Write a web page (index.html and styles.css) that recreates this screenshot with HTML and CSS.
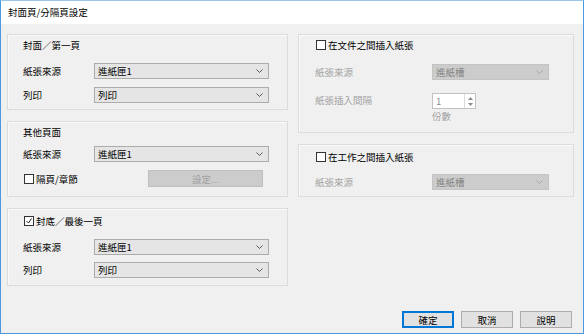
FILE: index.html
```html
<!DOCTYPE html>
<html lang="zh-Hant">
<head>
  <meta charset="UTF-8">
  <title>封面頁/分隔頁設定</title>
  <link rel="stylesheet" href="styles.css">
</head>
<body>
  <div class="window">
    <div class="titlebar">封面頁/分隔頁設定</div>

    <div class="main">
      <div class="col col-left">
        <section class="group g1">
          <div class="group-title">封面／第一頁</div>
          <div class="row first">
            <span class="label">紙張來源</span>
            <div class="select"><span>進紙匣1</span><svg width="7" height="4"><polyline points="0.5,0.5 3.5,3.5 6.5,0.5"/></svg></div>
          </div>
          <div class="row">
            <span class="label">列印</span>
            <div class="select"><span>列印</span><svg width="7" height="4"><polyline points="0.5,0.5 3.5,3.5 6.5,0.5"/></svg></div>
          </div>
        </section>

        <section class="group g2">
          <div class="group-title">其他頁面</div>
          <div class="row first">
            <span class="label">紙張來源</span>
            <div class="select"><span>進紙匣1</span><svg width="7" height="4"><polyline points="0.5,0.5 3.5,3.5 6.5,0.5"/></svg></div>
          </div>
          <div class="row row-check">
            <label class="check"><span class="box"></span>隔頁/章節</label>
            <div class="btn disabled">設定...</div>
          </div>
        </section>

        <section class="group g3">
          <label class="group-title check"><span class="box checked"><svg width="8" height="8"><polyline points="1.5,4 3.5,6 6.5,1.5"/></svg></span>封底／最後一頁</label>
          <div class="row first">
            <span class="label">紙張來源</span>
            <div class="select"><span>進紙匣1</span><svg width="7" height="4"><polyline points="0.5,0.5 3.5,3.5 6.5,0.5"/></svg></div>
          </div>
          <div class="row">
            <span class="label">列印</span>
            <div class="select"><span>列印</span><svg width="7" height="4"><polyline points="0.5,0.5 3.5,3.5 6.5,0.5"/></svg></div>
          </div>
        </section>
      </div>

      <div class="col col-right">
        <section class="group rg1">
          <label class="group-title check"><span class="box"></span>在文件之間插入紙張</label>
          <div class="row first">
            <span class="label off">紙張來源</span>
            <div class="select off"><span>進紙槽</span><svg width="7" height="4"><polyline points="0.5,0.5 3.5,3.5 6.5,0.5"/></svg></div>
          </div>
          <div class="row row-spin">
            <span class="label off">紙張插入間隔</span>
            <div class="spin-wrap">
              <div class="spin">
                <span class="spin-val">1</span>
                <div class="spin-btns">
                  <svg width="5" height="3"><polygon points="0,3 2.5,0 5,3"/></svg>
                  <svg width="5" height="3"><polygon points="0,0 2.5,3 5,0"/></svg>
                </div>
              </div>
              <div class="unit">份數</div>
            </div>
          </div>
        </section>

        <section class="group rg2">
          <label class="group-title check"><span class="box"></span>在工作之間插入紙張</label>
          <div class="row first">
            <span class="label off">紙張來源</span>
            <div class="select off"><span>進紙槽</span><svg width="7" height="4"><polyline points="0.5,0.5 3.5,3.5 6.5,0.5"/></svg></div>
          </div>
        </section>
      </div>
    </div>

    <div class="footer">
      <div class="btn default">確定</div>
      <div class="btn">取消</div>
      <div class="btn">說明</div>
    </div>
  </div>
</body>
</html>
```

FILE: styles.css
```css
* {
  box-sizing: border-box;
}
body {
  margin: 0;
  font-family: "Noto Sans CJK TC", "Noto Sans", sans-serif;
  font-size: 9.5px;
  color: #000;
}
.window {
  width: 584px;
  height: 334px;
  display: flex;
  flex-direction: column;
  background-color: #f0f0f0;
  border: 1px solid #4a98e0;
  border-top-color: #9cc7ec;
}
.titlebar {
  height: 23px;
  line-height: 23px;
  padding-left: 7px;
  background-color: #fff;
  font-size: 9.5px;
}
.main {
  display: flex;
  gap: 10px;
  padding: 10px 0 0 6px;
}
.col {
  display: flex;
  flex-direction: column;
  gap: 11px;
}
.col-left {
  width: 281px;
}
.col-right {
  width: 276px;
}
.group {
  border: 1px solid #dcdcdc;
  box-shadow: inset 1px 1px 0 #fafafa;
  padding: 2px 0 0 15px;
}
.col-right .group {
  padding-left: 16px;
}
.g1 { height: 76px; }
.g2 { height: 76px; }
.g3 { height: 78px; padding-top: 4px; }
.rg1 { height: 99px; }
.rg2 { height: 53px; padding-top: 4px; }

.group-title {
  display: flex;
  align-items: center;
  height: 16px;
  line-height: 16px;
}
.row {
  display: grid;
  grid-template-columns: 71px 175px;
  align-items: center;
  height: 16px;
  margin-top: 8px;
}
.row.first { margin-top: 10px; }
.g2 .row.first { margin-top: 6px; }
.g3 .row + .row { margin-top: 7px; }
.rg1 .row.first { margin-top: 11px; }
.rg2 .row.first { margin-top: 9px; }
.col-right .row {
  grid-template-columns: 117px 117px;
}
.label.off {
  color: #a3a3a3;
}

.select {
  height: 16px;
  display: flex;
  align-items: center;
  justify-content: space-between;
  padding: 0 5px 0 3px;
  background-color: #e5e5e5;
  border: 1px solid #acacac;
}
.select svg polyline {
  fill: none;
  stroke: #5a5a5a;
  stroke-width: 1;
}
.select.off {
  background-color: #cccccc;
  border-color: #c4c4c4;
  color: #838383;
}
.select.off svg polyline {
  stroke: #a8a8a8;
}

.check {
  display: flex;
  align-items: center;
  margin-left: 1px;
}
.box {
  width: 10px;
  height: 10px;
  border: 1px solid #333;
  background-color: #fff;
  margin-right: 2px;
  display: flex;
  align-items: center;
  justify-content: center;
}
.box svg polyline {
  fill: none;
  stroke: #222;
  stroke-width: 1;
}

.row-check {
  grid-template-columns: 125px 115px;
  height: 17px;
}
.btn {
  height: 17px;
  display: flex;
  align-items: center;
  justify-content: center;
  background-color: #e1e1e1;
  border: 1px solid #adadad;
}
.btn.disabled {
  background-color: #cccccc;
  border-color: #bfbfbf;
  color: #a0a0a0;
}
.btn.default {
  border-color: #0078d7;
  box-shadow: inset 0 0 0 1px #0078d7;
}

.row-spin {
  margin-top: 13px;
  align-items: start;
}
.spin {
  width: 44px;
  height: 16px;
  display: flex;
  background-color: #fff;
  border: 1px solid #c2c2c2;
}
.spin-val {
  flex: 1;
  padding-left: 3px;
  line-height: 14px;
  color: #8a8a8a;
}
.spin-btns {
  width: 11px;
  border-left: 1px solid #dadada;
  display: flex;
  flex-direction: column;
  justify-content: space-around;
  align-items: center;
  padding: 1px 0;
}
.spin-btns svg polygon {
  fill: #8a8a8a;
}
.unit {
  color: #a3a3a3;
  line-height: 14px;
}

.footer {
  margin-top: auto;
  display: flex;
  justify-content: flex-end;
  gap: 7px;
  padding: 0 11px 5px 0;
}
.footer .btn {
  width: 52px;
}
```
